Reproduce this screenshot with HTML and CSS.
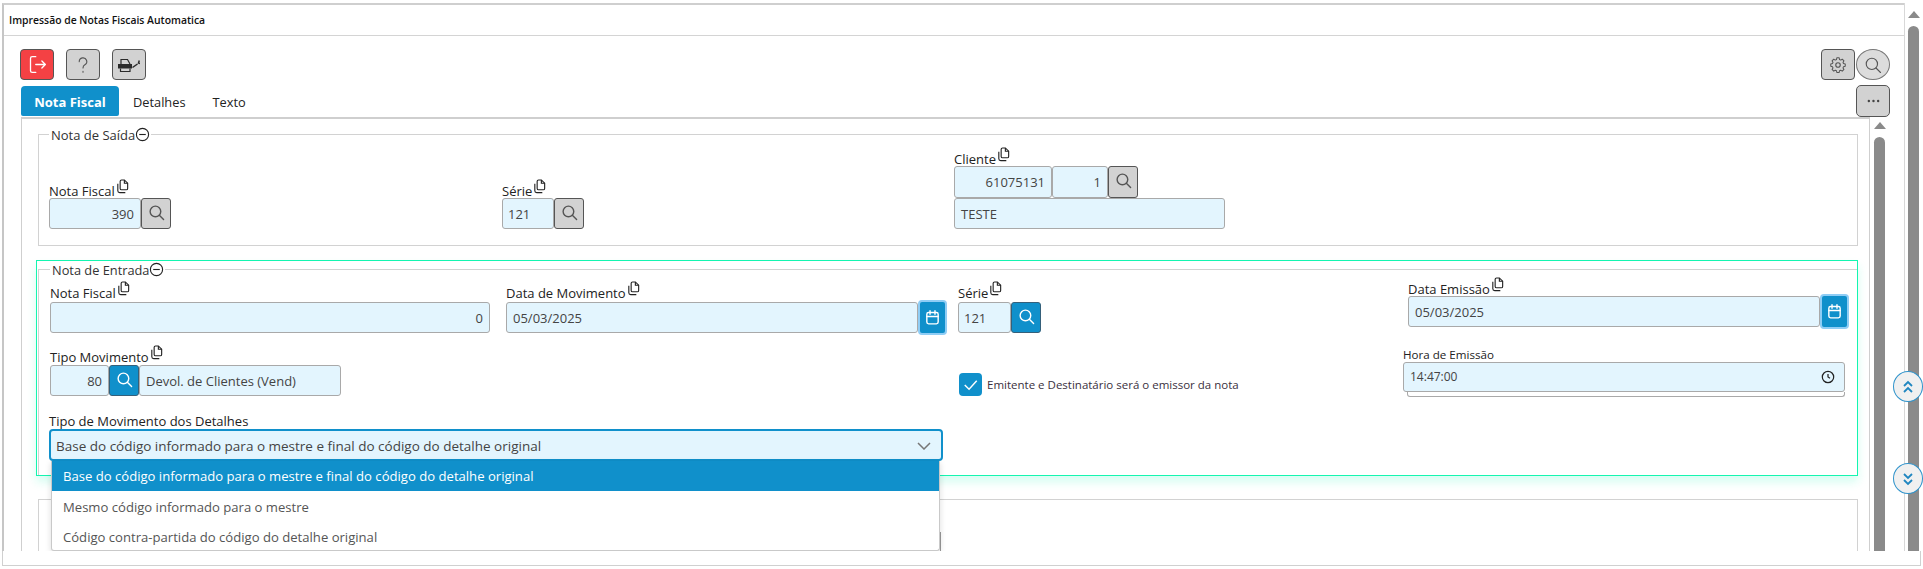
FILE: index.html
```html
<!DOCTYPE html>
<html lang="pt-BR">
<head>
<meta charset="utf-8">
<title>Impressão de Notas Fiscais Automatica</title>
<link rel="stylesheet" href="styles.css">
</head>
<body>
<svg class="defs" width="0" height="0" aria-hidden="true">
  <symbol id="i-search" viewBox="0 0 24 24"><circle cx="10.5" cy="10.5" r="7.5"/><path d="M16 16l6 6"/></symbol>
  <symbol id="i-copy" viewBox="0 0 16 16"><path d="M5.500 2.500a1.500 1.500 0 0 1 1.500-1.500h3l3.500 3.500v5.500a1.500 1.500 0 0 1-1.500 1.500h-5a1.500 1.500 0 0 1-1.500-1.500z"/><path d="M10 1v3.500h3.500"/><path d="M3 5v7.500a2 2 0 0 0 2 2h6"/></symbol>
  <symbol id="i-cal" viewBox="0 0 24 24"><rect x="4" y="5" width="16" height="16" rx="2.500"/><path d="M4 10.500h16M8.500 2.500v5M15.500 2.500v5"/></symbol>
  <symbol id="i-minus" viewBox="0 0 16 16"><circle cx="8" cy="8" r="6.500"/><path d="M4.500 8h7"/></symbol>
</svg>
<div class="screen">
  <div class="window-body">
    <main class="main">
      <h1 class="title">Impressão de Notas Fiscais Automatica</h1>
      <div class="toolbar">
        <div class="tools">
          <button class="btn btn-red" type="button" aria-label="Sair"><svg class="ic ic-exit" viewBox="0 0 24 24"><path d="M10 3H6a2 2 0 0 0-2 2v14a2 2 0 0 0 2 2h4"/><path d="M10 12h11M17 8l4 4-4 4"/></svg></button>
          <button class="btn" type="button" aria-label="Ajuda"><svg class="ic" viewBox="0 0 24 24"><path d="M7 7.500a5 5 0 1 1 7.500 4.300c-1.800 1-2.500 2-2.500 4.200"/><path d="M12 20.500v1"/></svg></button>
          <button class="btn" type="button" aria-label="Imprimir"><svg class="ic-print" viewBox="0 0 22 14"><path class="top" d="M3 6V1.500h6.500L12 6"/><path class="fill" d="M0 6h14v4.500H0z"/><path class="top" d="M2.500 10.500v3h9.500v-3"/><path class="wr" d="M14.500 9.500l5-3.500M21.300 2.500l-.8 2.500 1.500.5"/></svg></button>
        </div>
        <div class="tools tools-right">
          <button class="btn" type="button" aria-label="Configurações"><svg class="ic" viewBox="0 0 24 24"><path d="M10.300 3h3.400l.5 2.600 1.700.8 2.300-1.300 2.400 2.400-1.300 2.300.7 1.700 2.500.6v3.300l-2.500.6-.7 1.700 1.300 2.300-2.400 2.400-2.300-1.300-1.700.7-.5 2.600h-3.400l-.5-2.600-1.700-.7-2.300 1.300-2.400-2.400 1.300-2.300-.7-1.700-2.500-.6v-3.300l2.500-.6.700-1.700-1.300-2.300 2.400-2.400 2.300 1.300 1.700-.8z" transform="translate(12 12) scale(.92) translate(-12 -13.500)"/><circle cx="12" cy="12" r="3"/></svg></button>
          <button class="btn btn-round" type="button" aria-label="Pesquisar"><svg class="ic"><use href="#i-search"/></svg></button>
        </div>
      </div>
      <div class="tabbar">
        <div class="tabs">
          <a class="tab tab-on">Nota Fiscal</a>
          <a class="tab tab-det">Detalhes</a>
          <a class="tab tab-txt">Texto</a>
        </div>
        <button class="btn btn-more" type="button" aria-label="Mais">
          <svg class="ic-dots" viewBox="0 0 14 4"><circle cx="2" cy="2" r="1.300"/><circle cx="7" cy="2" r="1.300"/><circle cx="12" cy="2" r="1.300"/></svg>
        </button>
      </div>
      <div class="work">
        <section class="panel">
          <fieldset class="group group-out">
            <legend class="legend"><span>Nota de Saída</span><svg class="ic-minus"><use href="#i-minus"/></svg></legend>
            <div class="out-grid">
              <div class="field">
                <label class="lbl">Nota Fiscal<svg class="ic-copy"><use href="#i-copy"/></svg></label>
                <div class="combo"><span class="inp num w92">390</span><button class="sq" type="button" aria-label="Buscar"><svg class="ic-s"><use href="#i-search"/></svg></button></div>
              </div>
              <div class="field">
                <label class="lbl">Série<svg class="ic-copy"><use href="#i-copy"/></svg></label>
                <div class="combo"><span class="inp w52">121</span><button class="sq" type="button" aria-label="Buscar"><svg class="ic-s"><use href="#i-search"/></svg></button></div>
              </div>
              <div class="field">
                <label class="lbl">Cliente<svg class="ic-copy"><use href="#i-copy"/></svg></label>
                <div class="combo combo-32"><span class="inp num w98">61075131</span><span class="inp num w56">1</span><button class="sq" type="button" aria-label="Buscar"><svg class="ic-s"><use href="#i-search"/></svg></button></div>
                <div class="combo"><span class="inp w271">TESTE</span></div>
              </div>
            </div>
          </fieldset>

          <div class="focus-box">
            <fieldset class="group group-in">
              <legend class="legend legend-in"><span>Nota de Entrada</span><svg class="ic-minus"><use href="#i-minus"/></svg></legend>
              <div class="in-grid">
                <div class="field drop">
                  <label class="lbl">Nota Fiscal<svg class="ic-copy"><use href="#i-copy"/></svg></label>
                  <div class="combo"><span class="inp num w440">0</span></div>
                </div>
                <div class="field drop">
                  <label class="lbl">Data de Movimento<svg class="ic-copy"><use href="#i-copy"/></svg></label>
                  <div class="combo"><span class="inp w412">05/03/2025</span><button class="sq sq-cal" type="button" aria-label="Calendário"><svg class="ic-s"><use href="#i-cal"/></svg></button></div>
                </div>
                <div class="field drop">
                  <label class="lbl">Série<svg class="ic-copy"><use href="#i-copy"/></svg></label>
                  <div class="combo"><span class="inp w53">121</span><button class="sq sq-blue" type="button" aria-label="Buscar"><svg class="ic-s"><use href="#i-search"/></svg></button></div>
                </div>
                <div class="field emission">
                  <label class="lbl">Data Emissão<svg class="ic-copy"><use href="#i-copy"/></svg></label>
                  <div class="combo"><span class="inp w412">05/03/2025</span><button class="sq sq-cal" type="button" aria-label="Calendário"><svg class="ic-s"><use href="#i-cal"/></svg></button></div>
                </div>

                <div class="field tipo">
                  <label class="lbl">Tipo Movimento<svg class="ic-copy"><use href="#i-copy"/></svg></label>
                  <div class="combo"><span class="inp num w59">80</span><button class="sq sq-blue" type="button" aria-label="Buscar"><svg class="ic-s"><use href="#i-search"/></svg></button><span class="inp w202">Devol. de Clientes (Vend)</span></div>
                </div>
                <div class="check-cell">
                  <span class="check"><svg viewBox="0 0 24 24"><path d="M6 12.500l4.500 4.500L18.500 8"/></svg></span>
                  <span class="check-text">Emitente e Destinatário será o emissor da nota</span>
                </div>
                <div class="field hour">
                  <label class="lbl lbl-small">Hora de Emissão</label>
                  <div class="inp time"><span>14:47:00</span><svg class="ic-clock" viewBox="0 0 16 16"><circle cx="8" cy="8" r="6.500"/><path d="M8 4.500V8l2.300 1.500"/></svg></div>
                  <div class="time-lip"></div>
                </div>

                <div class="field select-cell">
                  <label class="lbl lbl-sel">Tipo de Movimento dos Detalhes</label>
                  <div class="select">
                    <span>Base do código informado para o mestre e final do código do detalhe original</span>
                    <svg class="ic-chev" viewBox="0 0 14 8"><path d="M1 1l6 6 6-6"/></svg>
                    <ul class="menu">
                      <li class="opt opt-on">Base do código informado para o mestre e final do código do detalhe original</li>
                      <li class="opt">Mesmo código informado para o mestre</li>
                      <li class="opt">Código contra-partida do código do detalhe original</li>
                    </ul>
                  </div>
                </div>
              </div>
            </fieldset>
          </div>

          <fieldset class="group group-third"><div class="ghost"></div></fieldset>
        </section>
        <aside class="iscroll"><i class="tri"></i><i class="thumb"></i></aside>
      </div>
    </main>
    <aside class="oscroll"><i class="tri"></i><i class="thumb"></i></aside>
  </div>
  <div class="window-foot"></div>

  <button class="jump jump-up" type="button" aria-label="Subir"><svg viewBox="0 0 12 14"><path d="M2 6l4-4 4 4M2 12l4-4 4 4"/></svg></button>
  <button class="jump jump-down" type="button" aria-label="Descer"><svg viewBox="0 0 12 14"><path d="M2 2l4 4 4-4M2 8l4 4 4-4"/></svg></button>
</div>
</body>
</html>
```

FILE: styles.css
```css
* { box-sizing: border-box; }
html, body { margin: 0; padding: 0; background: #fff; }
body { font-family: "Open Sans", "Noto Sans", sans-serif; font-size: 12px; color: #222; }
.defs { position: absolute; }
.screen { position: relative; width: 1923px; height: 569px; padding: 3px 2px 0; overflow: hidden; }
.window-body { display: flex; height: 548px; }
.main { width: 1902px; height: 548px; border-top: 2px solid #cfcfcf; border-left: 2px solid #c6c6c6; overflow: hidden; }
.window-foot { height: 15px; border: 1px solid #d0d0d0; border-top: 0; }

.title { margin: 0; height: 31px; padding-left: 5px; font-size: 10.400px; font-weight: 600; line-height: 30px; color: #111; border-bottom: 1px solid #d4d4d4; }

.toolbar { display: flex; justify-content: space-between; padding: 13px 14px 0 16px; }
.tools { display: flex; gap: 12px; }
.tools-right { gap: 1px; }
.btn { display: flex; align-items: center; justify-content: center; width: 34px; height: 31px; padding: 0; background: #d2d2d2; border: 1px solid #555; border-radius: 4px; color: #555; }
.btn-red { background: #f44144; color: #fff; }
.btn-round { border-radius: 50%; background: #dcdcdc; border-color: #777; }
.ic { width: 18px; height: 18px; fill: none; stroke: currentColor; stroke-width: 1.500; stroke-linecap: round; stroke-linejoin: round; }
.ic-exit { width: 21px; height: 21px; }
.ic-print { width: 22px; height: 14px; }
.ic-print .fill { fill: #2a2a2a; }
.ic-print .top { fill: none; stroke: #2a2a2a; stroke-width: 1.200; }
.ic-print .wr { stroke: #2a2a2a; stroke-width: 1.500; fill: none; }

.tabbar { display: flex; justify-content: space-between; align-items: flex-end; height: 32px; margin-top: 5px; padding: 0 14px 0 17px; }
.tabs { display: flex; align-items: flex-end; height: 32px; padding-bottom: 1px; }
.tab { display: block; height: 30px; font-size: 12.800px; line-height: 32px; color: #222; }
.tab-on { width: 98px; font-size: 13px; text-align: center; font-weight: 700; color: #fff; background: #1090cb; border-radius: 4px 4px 2px 2px; }
.tab-det { margin-left: 14px; }
.tab-txt { margin-left: 27px; }
.btn-more { width: 34px; height: 32px; border-radius: 5px; }
.ic-dots { width: 13px; height: 4px; fill: #444; }

.work { display: flex; padding: 0 14px 0 17px; }
.panel { flex: 1; height: 436px; border-top: 2px solid #cfcfcf; border-left: 1px solid #cfcfcf; border-right: 1px solid #cfcfcf; padding: 7px 11px 0 14px; }

.iscroll, .oscroll { position: relative; flex: none; }
.iscroll { width: 20px; height: 436px; }
.oscroll { width: 17px; height: 548px; border-left: 1px solid #d8d8d8; }
.tri { position: absolute; width: 0; height: 0; border-left: 6px solid transparent; border-right: 6px solid transparent; border-bottom: 7px solid #8a8a8a; }
.thumb { position: absolute; width: 11px; bottom: 0; background: #8a8a8a; border-radius: 6px 6px 0 0; }
.iscroll .tri { left: 4px; top: 5px; }
.iscroll .thumb { left: 4px; top: 20px; }
.oscroll .tri { left: 3px; top: 8px; }
.oscroll .thumb { left: 3px; top: 23px; }

.group { margin: 0; padding: 0; min-width: 0; border: 1px solid #d2d2d2; }
.group-out { margin-left: 2px; padding: 8px 10px 16px; }
.legend { display: flex; align-items: center; height: 16px; padding: 0 0 0 2px; margin-left: 0; font-size: 13px; line-height: 16px; color: #333; }
.legend span { position: relative; top: 1px; }
.legend-in { font-size: 12.800px; }
.ic-minus { width: 15px; height: 15px; margin-right: 1px; fill: none; stroke: #222; stroke-width: 1.200; }

.out-grid { display: grid; grid-template-columns: 453px 452px 1fr; align-items: end; }
.field { display: flex; flex-direction: column; align-items: flex-start; }
.lbl { display: flex; align-items: flex-start; height: 16px; font-size: 13px; line-height: 18px; color: #222; white-space: nowrap; }
.ic-copy { width: 15px; height: 15px; margin-top: -3px; fill: none; stroke: #222; stroke-width: 1.200; }
.combo { display: flex; }
.combo-32 .inp, .combo-32 .sq { height: 32px; }

.inp { display: block; height: 31px; padding: 0 5px; font-size: 13px; line-height: 30px; color: #444; background: #e3f5fe; border: 1px solid #a9a9a9; border-radius: 3px; white-space: nowrap; }
.num { text-align: right; padding-right: 6px; }
.w52 { width: 52px; } .w53 { width: 53px; } .w56 { width: 56px; } .w59 { width: 59px; }
.w92 { width: 92px; } .w98 { width: 98px; } .w202 { width: 202px; padding-left: 6px; }
.w271 { width: 271px; padding-left: 6px; } .w412 { width: 412px; padding-left: 6px; } .w440 { width: 440px; }
.sq { display: flex; align-items: center; justify-content: center; width: 30px; height: 31px; padding: 0 0 3px; background: #d2d2d2; border: 1px solid #555; border-radius: 3px; color: #555; }
.sq-blue { background: #1090cb; border-color: #35607a; color: #fff; }
.sq-cal { background: #1090cb; border: 2px solid #8fcdf5; color: #fff; width: 29px; height: 35px; margin-top: -2px; padding: 0; border-radius: 4px; }
.ic-s { width: 17px; height: 17px; fill: none; stroke: currentColor; stroke-width: 2; stroke-linecap: round; stroke-linejoin: round; }

.focus-box { margin-top: 14px; border: 1px solid #14f5b0; box-shadow: 0 6px 9px rgba(20, 245, 176, .18); padding: 0 0 0 1px; height: 216px; }
.group-in { border-width: 1px 0 0 1px; padding: 3px 0 0 11px; height: 214px; }
.in-grid { display: grid; grid-template-columns: 456px 452px 450px 1fr; grid-template-rows: 68px 66px auto; }
.drop { padding-top: 4px; }
.drop .lbl { height: 18px; }
.emission { padding-top: 1px; }
.emission .lbl { margin-top: -1px; }
.tipo .lbl { height: 17px; }
.lbl-small { font-size: 11.600px; height: 14px; line-height: 14px; }
.check-cell { grid-column: 3; display: flex; align-items: center; gap: 5px; padding: 25px 0 0 1px; align-self: start; }
.check { display: flex; width: 23px; height: 23px; background: #1090cb; border-radius: 4px; }
.check svg { width: 23px; height: 23px; fill: none; stroke: #fff; stroke-width: 1.500; }
.check-text { font-size: 11.500px; color: #3a3040; }
.hour { grid-column: 4; margin-left: -5px; }
.time { display: flex; justify-content: space-between; align-items: center; width: 442px; height: 30px; padding: 0 9px 0 6px; font-size: 12px; }
.ic-clock { width: 14px; height: 14px; fill: none; stroke: #222; stroke-width: 1.400; }
.time-lip { align-self: flex-start; width: 438px; height: 5px; margin-left: 4px; border: 1px solid #a9a9a9; border-top: 0; border-radius: 0 0 3px 3px; }
.select-cell { grid-column: 1 / span 2; margin-left: -1px; }
.lbl-sel { height: 15px; line-height: 15px; }
.select { position: relative; display: flex; justify-content: space-between; align-items: center; width: 894px; height: 32px; padding: 1px 10px 0 5px; font-size: 13.500px; color: #444; background: #e3f5fe; border: 2px solid #1090cb; border-radius: 4px; white-space: nowrap; }
.ic-chev { width: 14px; height: 8px; fill: none; stroke: #777; stroke-width: 1.500; }
.menu { position: absolute; z-index: 5; left: 0; top: 30px; width: 889px; margin: 0; padding: 0; list-style: none; background: #fff; border: 1px solid #c9c9c9; border-top: 0; border-radius: 0 0 3px 3px; box-shadow: 0 2px 6px rgba(0, 0, 0, .14); }
.opt { height: 29.500px; padding-left: 11px; font-size: 13.100px; line-height: 32px; color: #555; }
.opt-on { height: 30px; line-height: 31px; color: #fff; background: #1090cb; }

.group-third { margin: 23px 0 0 2px; height: 80px; }
.ghost { width: 902px; height: 30px; margin-top: 32px; border-right: 1px solid #999; }

.jump { position: absolute; left: 1893px; display: flex; align-items: center; justify-content: center; width: 30px; height: 31px; padding: 0; background: #f0f0f0; border: 1px solid #2f93cb; border-radius: 50%; }
.jump svg { width: 12px; height: 14px; fill: none; stroke: #1f86c0; stroke-width: 1.800; }
.jump-up { top: 371px; }
.jump-down { top: 463px; }
```
